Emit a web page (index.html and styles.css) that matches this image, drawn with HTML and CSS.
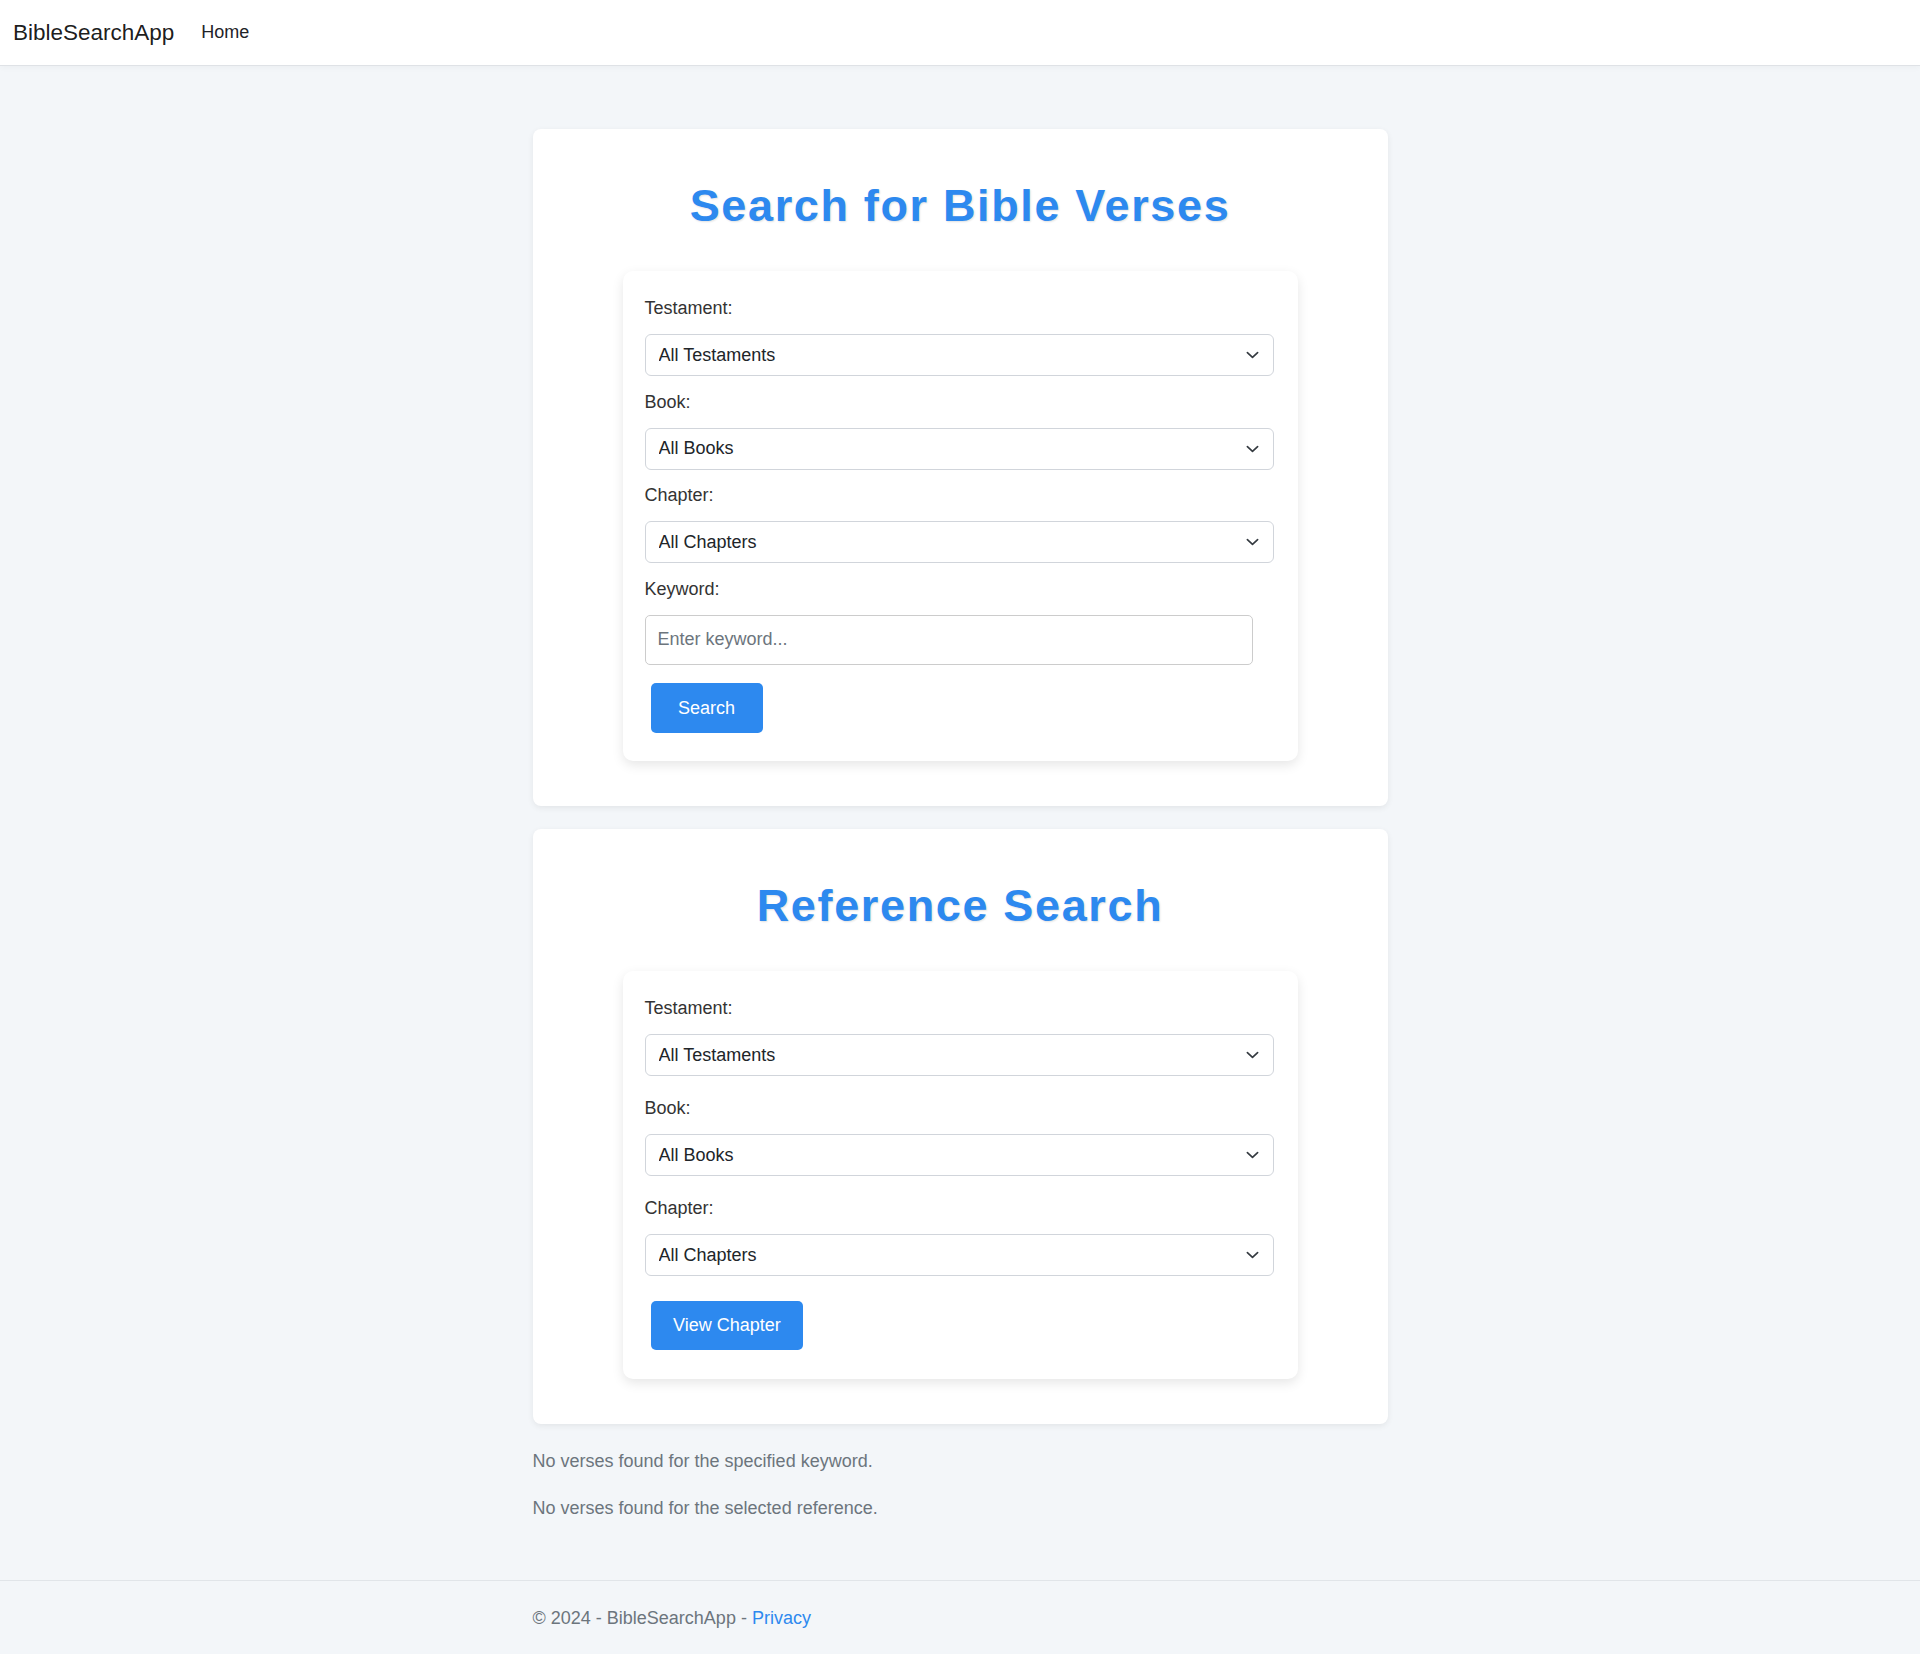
FILE: index.html
```html
<!DOCTYPE html>
<html lang="en">
<head>
<meta charset="utf-8">
<title>BibleSearchApp</title>
<link rel="stylesheet" href="styles.css">
</head>
<body>
<nav class="navbar">
  <a class="brand" href="#">BibleSearchApp</a>
  <a class="nav-link" href="#">Home</a>
</nav>
<main class="main">
  <section class="panel">
    <h1 class="panel-title">Search for Bible Verses</h1>
    <form class="form-card form-search">
      <label class="field-label" for="s-testament">Testament:</label>
      <select class="field-select" id="s-testament"><option>All Testaments</option></select>
      <label class="field-label" for="s-book">Book:</label>
      <select class="field-select" id="s-book"><option>All Books</option></select>
      <label class="field-label" for="s-chapter">Chapter:</label>
      <select class="field-select" id="s-chapter"><option>All Chapters</option></select>
      <label class="field-label" for="s-keyword">Keyword:</label>
      <input class="field-input" id="s-keyword" type="text" placeholder="Enter keyword...">
      <button class="btn btn-search" type="button">Search</button>
    </form>
  </section>
  <section class="panel">
    <h1 class="panel-title">Reference Search</h1>
    <form class="form-card form-reference">
      <label class="field-label" for="r-testament">Testament:</label>
      <select class="field-select" id="r-testament"><option>All Testaments</option></select>
      <label class="field-label" for="r-book">Book:</label>
      <select class="field-select" id="r-book"><option>All Books</option></select>
      <label class="field-label" for="r-chapter">Chapter:</label>
      <select class="field-select" id="r-chapter"><option>All Chapters</option></select>
      <button class="btn btn-view" type="button">View Chapter</button>
    </form>
  </section>
  <div class="results">
    <p class="result-msg">No verses found for the specified keyword.</p>
    <p class="result-msg">No verses found for the selected reference.</p>
  </div>
</main>
<footer class="footer">
  <div class="footer-inner">&copy; 2024 - BibleSearchApp - <a class="footer-link" href="#">Privacy</a></div>
</footer>
</body>
</html>
```

FILE: styles.css
```css
*, *::before, *::after {
  box-sizing: border-box;
}

html {
  font-size: 18px;
}

body {
  margin: 0;
  min-height: 100vh;
  display: flex;
  flex-direction: column;
  font-family: "Liberation Sans", Arial, sans-serif;
  font-size: 18px;
  line-height: 1.5;
  color: #212529;
  background: #f3f6f9;
}

.navbar {
  height: 66px;
  display: flex;
  align-items: center;
  padding: 0 13px;
  background: #ffffff;
  border-bottom: 1px solid #dfe2e6;
  box-shadow: 0 2px 6px rgba(0, 0, 0, 0.03);
}

.brand {
  font-size: 22.5px;
  line-height: 1.5;
  color: rgba(0, 0, 0, 0.9);
  text-decoration: none;
  margin-right: 18px;
}

.nav-link {
  padding: 0 9px;
  color: #1f2328;
  text-decoration: none;
}

.main {
  width: 855px;
  margin: 0 auto;
  padding-top: 63px;
}

.panel {
  background: #ffffff;
  border-radius: 8px;
  box-shadow: 0 2px 6px rgba(0, 0, 0, 0.07);
  padding: 50px 90px 45px;
  margin-bottom: 23px;
}

.panel-title {
  margin: 0 0 38px;
  text-align: center;
  font-size: 45px;
  line-height: 54px;
  font-weight: 700;
  letter-spacing: 1.65px;
  color: #2d89ef;
  text-shadow: 1px 1px 2px rgba(0, 0, 0, 0.12);
}

.form-card {
  display: flex;
  flex-direction: column;
  background: #ffffff;
  border-radius: 10px;
  box-shadow: 0 4px 12px rgba(0, 0, 0, 0.1);
  padding: 24px 24px 22px 22px;
}

.form-reference {
  padding-bottom: 23px;
}

.field-label {
  display: block;
  line-height: 27px;
  margin-bottom: 12px;
  color: #333333;
}

.field-select {
  display: block;
  width: 100%;
  height: 42px;
  margin: 0 0 12.5px;
  padding: 0 40px 0 13px;
  font: inherit;
  font-size: 18px;
  color: #212529;
  background-color: #ffffff;
  background-image: url("data:image/svg+xml,%3Csvg xmlns='http://www.w3.org/2000/svg' viewBox='0 0 14 8'%3E%3Cpath fill='none' stroke='%23343a40' stroke-width='1.8' stroke-linecap='round' stroke-linejoin='round' d='M1.5 1.5 7 6.5l5.5-5'/%3E%3C/svg%3E");
  background-repeat: no-repeat;
  background-position: right 14px center;
  background-size: 13px 8px;
  border: 1px solid #d1d5db;
  border-radius: 6px;
  appearance: none;
  -webkit-appearance: none;
}

.form-reference .field-select {
  margin-bottom: 19px;
}

.field-input {
  display: block;
  width: 608px;
  height: 50px;
  margin: 0 0 12.5px;
  padding: 0 12px;
  font: inherit;
  font-size: 18px;
  color: #212529;
  background: #ffffff;
  border: 1px solid #cccccc;
  border-radius: 5px;
}

.field-input::placeholder {
  color: #6c757d;
}

.btn {
  align-self: flex-start;
  margin: 6px;
  height: 50px;
  padding: 0 22.5px;
  border: 0;
  border-radius: 5px;
  background: #2d89ef;
  color: #ffffff;
  font: inherit;
  font-size: 18px;
  line-height: 50px;
  cursor: pointer;
}

.btn-search {
  min-width: 112px;
}

.btn-view {
  height: 49px;
  line-height: 49px;
}

.results {
  padding-top: 1px;
}

.result-msg {
  margin: 0 0 19.5px;
  color: #6c757d;
}

.footer {
  margin-top: auto;
  border-top: 1px solid #e1e5e9;
  padding-top: 1px;
  line-height: 72px;
  color: #6c757d;
  white-space: nowrap;
}

.footer-inner {
  width: 855px;
  margin: 0 auto;
}

.footer-link {
  color: #2d89ef;
  text-decoration: none;
}
```
